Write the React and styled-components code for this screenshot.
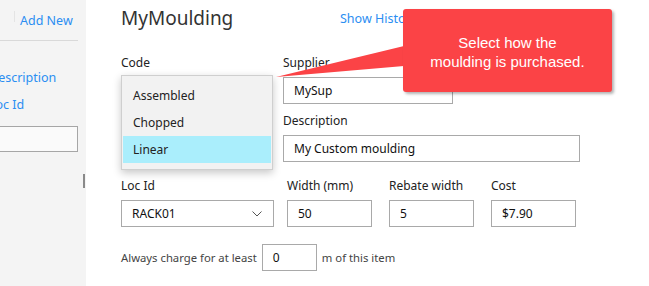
import React from "react";
import styled, { createGlobalStyle } from "styled-components";

const GlobalStyle = createGlobalStyle`
  html, body {
    margin: 0;
    padding: 0;
    background: #ffffff;
  }
  body {
    font-family: "Noto Sans", "Open Sans", sans-serif;
    color: #222;
  }
`;

const Page = styled.div`
  display: flex;
  width: 649px;
  height: 286px;
  overflow: hidden;
  position: relative;
`;

const Sidebar = styled.div`
  position: relative;
  width: 86px;
  flex-shrink: 0;
  background: #f4f4f4;
  overflow: hidden;
`;

const SidebarTop = styled.div`
  display: flex;
  align-items: center;
  height: 40px;
  width: 78px;
  border-bottom: 1px solid #d9d9d9;
`;

const Divider = styled.div`
  width: 1px;
  height: 11px;
  margin: 0 5px 8px 14px;
  background: #e4e4e4;
`;

const LinkText = styled.a`
  font-size: 12.5px;
  color: #2b8ef2;
  text-decoration: none;
  white-space: nowrap;
  cursor: pointer;
`;

const SideList = styled.div`
  display: flex;
  flex-direction: column;
  gap: 10px;
  margin: 28px 0 0 -11px;
`;

const SideInput = styled.div`
  width: 88px;
  height: 24px;
  margin: 13px 0 0 -12px;
  border: 1px solid #a6a6a6;
  background: #fafafa;
`;

const ScrollThumb = styled.div`
  position: absolute;
  left: 83px;
  top: 174px;
  width: 2px;
  height: 14px;
  background: #8a8a8a;
`;

const Main = styled.div`
  position: relative;
  flex: 1;
  padding: 4px 0 0 35px;
`;

const Header = styled.div`
  display: flex;
  align-items: center;
  height: 28px;
`;

const Title = styled.h1`
  margin: 0;
  width: 219px;
  font-size: 19px;
  font-weight: 400;
  color: #333;
`;

const Row = styled.div`
  display: flex;
  gap: ${(p) => p.$gap || 9}px;
  margin-top: ${(p) => p.$top || 0}px;
`;

const Field = styled.div`
  display: flex;
  flex-direction: column;
  gap: 5px;
  width: ${(p) => p.$w}px;
  margin-left: ${(p) => p.$ml || 0}px;
`;

const Label = styled.label`
  font-size: 12px;
  line-height: 18px;
  color: #222;
`;

const Input = styled.div`
  box-sizing: border-box;
  display: flex;
  align-items: center;
  justify-content: space-between;
  height: 27px;
  padding: 0 11px 0 10px;
  border: 1px solid #a9a9a9;
  background: #fff;
  font-size: 12px;
  color: #111;
  width: ${(p) => (p.$w ? p.$w + "px" : "auto")};
`;

const SelectSlot = styled.div`
  position: relative;
  height: 27px;
`;

const Chevron = () => (
  <svg width="10" height="6" viewBox="0 0 10 6">
    <path d="M0.5 0.5 L5 5 L9.5 0.5" fill="none" stroke="#555" strokeWidth="1" />
  </svg>
);

const ChargeRow = styled.div`
  display: flex;
  align-items: center;
  gap: 5px;
  margin-top: 17px;
  font-size: 11.3px;
  color: #444;
`;

const Menu = styled.div`
  position: absolute;
  left: 0;
  top: -2px;
  width: 152px;
  box-sizing: border-box;
  padding: 6px 1px 6px;
  background: #f2f2f2;
  border: 1px solid #cfcfcf;
  box-shadow: 0 3px 8px rgba(0, 0, 0, 0.22);
  z-index: 2;
`;

const MenuItem = styled.div`
  height: 27px;
  display: flex;
  align-items: center;
  padding-left: 10px;
  font-size: 12px;
  color: #222;
  background: ${(p) => (p.$active ? "#aaeefc" : "transparent")};
`;

const Callout = styled.div`
  position: absolute;
  left: 317px;
  top: 9px;
  width: 209px;
  height: 83px;
  box-sizing: border-box;
  display: flex;
  align-items: center;
  justify-content: center;
  text-align: center;
  padding-top: 2px;
  background: #fb4346;
  border-radius: 3px;
  box-shadow: 2px 2px 3px rgba(0, 0, 0, 0.3);
  font-family: "Liberation Sans", Arial, sans-serif;
  font-size: 15px;
  line-height: 19px;
  color: #fff;
  z-index: 3;
`;

const Pointer = styled.svg`
  position: absolute;
  left: 190px;
  top: 44px;
  z-index: 3;
`;

export default function App() {
  return (
    <Page>
      <GlobalStyle />
      <Sidebar>
        <SidebarTop>
          <Divider />
          <LinkText>Add New</LinkText>
        </SidebarTop>
        <SideList>
          <LinkText>Description</LinkText>
          <LinkText>Loc Id</LinkText>
        </SideList>
        <SideInput />
        <ScrollThumb />
      </Sidebar>
      <Main>
        <Header>
          <Title>MyMoulding</Title>
          <LinkText>Show History</LinkText>
        </Header>
        <Row $top={22}>
          <Field $w={153}>
            <Label>Code</Label>
            <SelectSlot>
              <Menu>
                <MenuItem>Assembled</MenuItem>
                <MenuItem>Chopped</MenuItem>
                <MenuItem $active>Linear</MenuItem>
              </Menu>
            </SelectSlot>
          </Field>
          <Field $w={170}>
            <Label>Supplier</Label>
            <Input>MySup</Input>
          </Field>
        </Row>
        <Row $top={8}>
          <Field $w={297} $ml={162}>
            <Label>Description</Label>
            <Input>My Custom moulding</Input>
          </Field>
        </Row>
        <Row $top={15} $gap={13}>
          <Field $w={153}>
            <Label>Loc Id</Label>
            <Input>
              RACK01
              <Chevron />
            </Input>
          </Field>
          <Row $gap={17}>
            <Field $w={85}>
              <Label>Width (mm)</Label>
              <Input>50</Input>
            </Field>
            <Field $w={85}>
              <Label>Rebate width</Label>
              <Input>5</Input>
            </Field>
            <Field $w={85}>
              <Label>Cost</Label>
              <Input>$7.90</Input>
            </Field>
          </Row>
        </Row>
        <ChargeRow>
          <span>Always charge for at least</span>
          <Input $w={55}>0</Input>
          <span>m of this item</span>
        </ChargeRow>

        <Pointer width="130" height="36" viewBox="0 0 130 36">
          <polygon points="0,33 128,2 128,22" fill="#fb4346" />
        </Pointer>
        <Callout>
          Select how the
          <br />
          moulding is purchased.
        </Callout>
      </Main>
    </Page>
  );
}
